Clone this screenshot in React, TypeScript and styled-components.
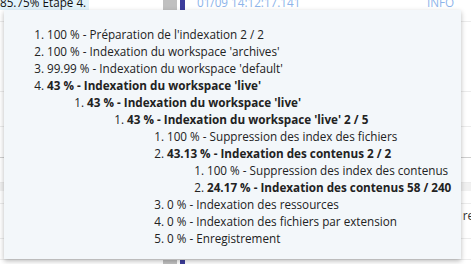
import { FC } from 'react'
import styled, { createGlobalStyle } from 'styled-components'

type Step = {
  label: string
  bold?: boolean
  children?: Step[]
}

const steps: Step[] = [
  { label: "100 % - Préparation de l'indexation 2 / 2" },
  { label: "100 % - Indexation du workspace 'archives'" },
  { label: "99.99 % - Indexation du workspace 'default'" },
  {
    label: "43 % - Indexation du workspace 'live'",
    bold: true,
    children: [
      {
        label: "43 % - Indexation du workspace 'live'",
        bold: true,
        children: [
          {
            label: "43 % - Indexation du workspace 'live' 2 / 5",
            bold: true,
            children: [
              { label: '100 % - Suppression des index des fichiers' },
              {
                label: '43.13 % - Indexation des contenus 2 / 2',
                bold: true,
                children: [
                  { label: '100 % - Suppression des index des contenus' },
                  { label: '24.17 % - Indexation des contenus 58 / 240', bold: true },
                ],
              },
              { label: '0 % - Indexation des ressources' },
              { label: '0 % - Indexation des fichiers par extension' },
              { label: '0 % - Enregistrement' },
            ],
          },
        ],
      },
    ],
  },
]

const GlobalStyle = createGlobalStyle`
  html, body {
    margin: 0;
    padding: 0;
    background: #ffffff;
    font-family: "Open Sans", "Liberation Sans", sans-serif;
    overflow: hidden;
  }
`

const Page = styled.div`
  position: relative;
  width: 471px;
  height: 264px;
  overflow: hidden;
  background: #ffffff;
`

// log table behind the tooltip, scrolled a few px
const LogTable = styled.div`
  margin-top: -5px;
  display: flex;
  flex-direction: column;
  font-size: 11.7px;
  line-height: 16px;
`

const LogRow = styled.div<{ $height: number; $line?: string; $bg?: string }>`
  display: flex;
  align-items: flex-start;
  height: ${p => p.$height}px;
  box-sizing: border-box;
  border-bottom: 1px solid ${p => p.$line || '#ececec'};
  background: ${p => p.$bg || 'transparent'};
`

const ProgressCell = styled.div`
  position: relative;
  width: 104px;
  height: 15px;
  color: #111;
`

const ProgressFill = styled.div`
  height: 100%;
  background: #e2f3fb;
`

const ProgressText = styled.span`
  position: absolute;
  left: 0;
  top: -1px;
  white-space: nowrap;
`

const Gap = styled.div<{ $w: number }>`
  width: ${p => p.$w}px;
  flex: none;
`

const Block = styled.div<{ $w: number; $color: string }>`
  width: ${p => p.$w}px;
  height: 19px;
  flex: none;
  background: ${p => p.$color};
`

const MetaText = styled.span<{ $w?: number }>`
  color: #8db4ea;
  margin-top: -1px;
  white-space: nowrap;
  width: ${p => (p.$w ? `${p.$w}px` : 'auto')};
  flex: none;
`

const TailText = styled.span`
  margin-left: auto;
  margin-right: -3px;
  padding-top: 3px;
  color: #333;
`

const Tooltip = styled.div`
  position: absolute;
  top: 10px;
  left: 4px;
  width: 457px;
  height: 249px;
  box-sizing: border-box;
  padding: 5px 3px;
  background: #f3f7fa;
  box-shadow: 0 2px 5px rgba(0, 0, 0, 0.28);
  color: #222;
  font-size: 11.7px;
  line-height: 17px;
`

const StepList = styled.ol<{ $root?: boolean }>`
  margin: ${p => (p.$root ? '11px 0' : '0')};
  padding-left: 40px;
  white-space: nowrap;
`

const StepLabel = styled.span<{ $bold?: boolean }>`
  font-weight: ${p => (p.$bold ? 700 : 400)};
`

const StepTree: FC<{ items: Step[]; root?: boolean }> = ({ items, root }) => (
  <StepList $root={root}>
    {items.map((s, i) => (
      <li key={i}>
        <StepLabel $bold={s.bold}>{s.label}</StepLabel>
        {s.children && <StepTree items={s.children} />}
      </li>
    ))}
  </StepList>
)

const App: FC = () => (
  <Page>
    <GlobalStyle />
    <LogTable>
      <LogRow $height={27}>
        <ProgressCell>
          <ProgressFill style={{ width: '85.75%' }} />
          <ProgressText>85.75% Étape 4.</ProgressText>
        </ProgressCell>
        <Gap $w={59} />
        <Block $w={14} $color="#c0c0c0" />
        <Gap $w={3} />
        <Block $w={5} $color="#3d3d9c" />
        <Gap $w={12} />
        <MetaText $w={230}>01/09 14:12:17.141</MetaText>
        <MetaText>INFO</MetaText>
      </LogRow>
      <LogRow $height={70} />
      <LogRow $height={35} />
      <LogRow $height={31} $line="#cfcfcf" />
      <LogRow $height={25} />
      <LogRow $height={8} $bg="#f1f1f1" $line="#f1f1f1" />
      <LogRow $height={13} />
      <LogRow $height={35}>
        <TailText>re</TailText>
      </LogRow>
      <LogRow $height={21} />
      <LogRow $height={19} $line="transparent">
        <Gap $w={163} />
        <Block $w={14} $color="#c0c0c0" />
        <Gap $w={3} />
        <Block $w={5} $color="#3d3d9c" />
      </LogRow>
    </LogTable>
    <Tooltip>
      <StepTree items={steps} root />
    </Tooltip>
  </Page>
)

export default App
